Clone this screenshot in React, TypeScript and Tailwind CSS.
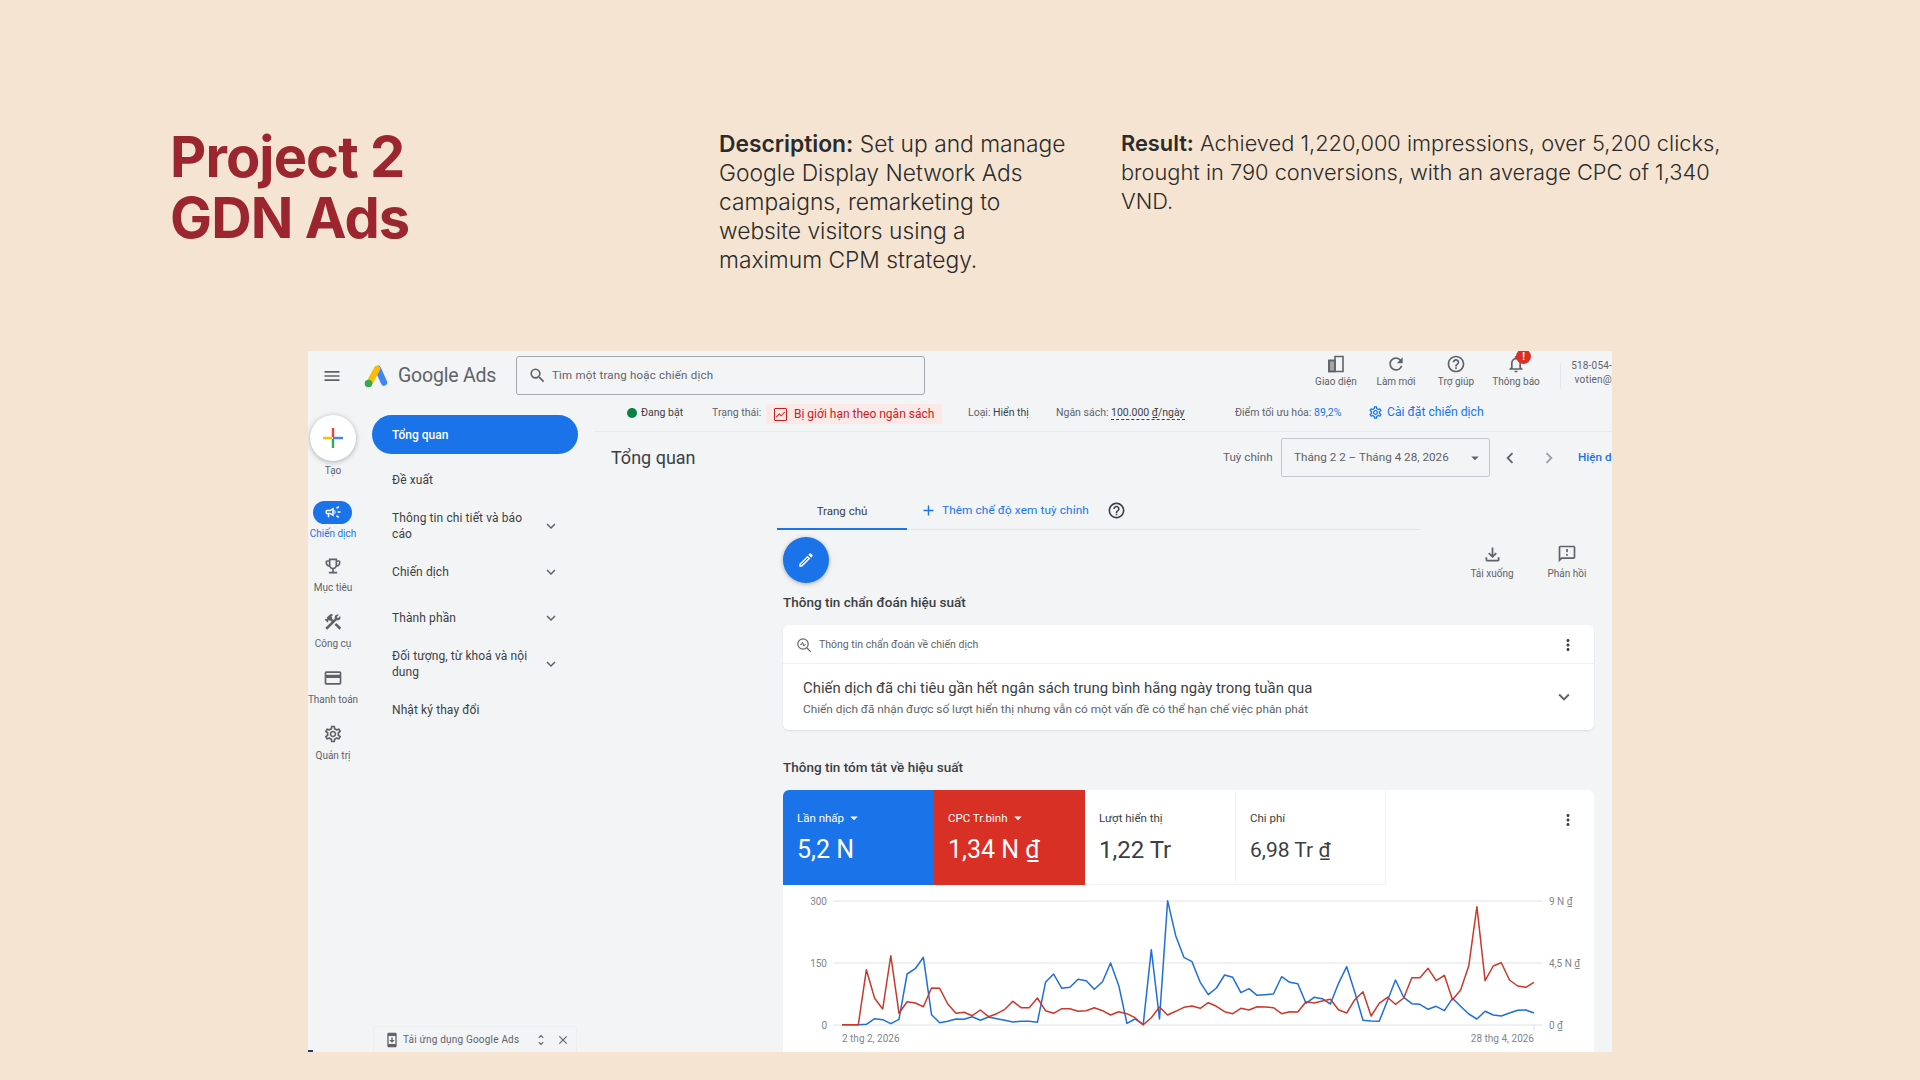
import React from "react";
import {
  MdMenu,
  MdSearch,
  MdOutlineCampaign,
  MdOutlineEmojiEvents,
  MdConstruction,
  MdOutlineCreditCard,
  MdOutlineSettings,
  MdExpandMore,
  MdRefresh,
  MdHelpOutline,
  MdNotificationsNone,
  MdOutlineFileDownload,
  MdOutlineFeedback,
  MdOutlineEdit,
  MdMoreVert,
  MdArrowDropDown,
  MdChevronLeft,
  MdChevronRight,
  MdClose,
  MdUnfoldMore,
  MdAdd,
  MdOutlineShowChart,
  MdSecurityUpdate,
} from "react-icons/md";

const red = [
  737, 737, 737, 572, 658, 690, 530, 703, 668, 672, 683, 627, 628, 675, 703, 700, 710, 693, 713, 704, 691, 667, 686, 686,
  657, 695, 703, 689, 689, 697, 695, 686, 695, 708, 698, 704, 716, 737, 716, 684, 708, 697, 685, 681, 688, 671, 682, 698,
  704, 688, 693, 683, 684, 686, 704, 698, 699, 668, 672, 666, 661, 692, 702, 662, 638, 711, 673, 655, 676, 657, 596, 596,
  568, 605, 589, 662, 633, 560, 383, 605, 561, 551, 603, 621, 625, 610,
];
const blue = [
  737, 737, 737, 736, 719, 722, 734, 721, 585, 569, 535, 707, 731, 727, 720, 721, 713, 724, 714, 719, 724, 729, 727, 727,
  730, 610, 585, 628, 625, 601, 605, 631, 608, 552, 620, 733, 720, 737, 512, 720, 365, 470, 535, 548, 610, 647, 627, 588,
  595, 641, 629, 649, 647, 645, 593, 610, 614, 673, 655, 659, 675, 613, 563, 640, 724, 726, 727, 665, 603, 655, 674, 676,
  691, 682, 695, 658, 682, 705, 720, 697, 708, 711, 702, 694, 693, 702,
];

const toPoints = (values: number[]) =>
  values.map((v, i) => `${(59 + i * 8.14).toFixed(1)},${(v / 3 - 106).toFixed(1)}`).join(" ");

function RailItem({ icon, label, h, active }: { icon: React.ReactNode; label: string; h: string; active?: boolean }) {
  return (
    <div className={`flex flex-col items-center ${h}`}>
      <div className="h-6 flex items-center justify-center">{icon}</div>
      <span className={`mt-[3px] text-[10px] leading-[14px] whitespace-nowrap ${active ? "text-[#1a73e8]" : "text-[#5f6368]"}`}>
        {label}
      </span>
    </div>
  );
}

function NavRow({ children, chevron }: { children: React.ReactNode; chevron?: boolean }) {
  return (
    <div className="h-[46px] flex items-center pl-[30px]">
      <span className="w-[150px] text-[12px] leading-[16px] text-[#3c4043] tracking-[0.1px]">{children}</span>
      {chevron && <MdExpandMore className="text-[18px] text-[#5f6368]" />}
    </div>
  );
}

function TopAction({ icon, label, gap }: { icon: React.ReactNode; label: string; gap?: string }) {
  return (
    <div className="w-[60px] flex flex-col items-center relative">
      <div className="h-[20px] flex items-center text-[#5f6368]">{icon}</div>
      <span className={`text-[10px] leading-[14px] text-[#5f6368] whitespace-nowrap ${gap ?? "mt-[1px]"}`}>{label}</span>
    </div>
  );
}

function Tile(props: { label: string; value: string; unit?: boolean; bg: string; caret?: boolean; w?: string; size?: string }) {
  const { label, value, unit, bg, caret, w, size } = props;
  return (
    <div className={`h-[95px] pl-[14px] pt-[20px] shrink-0 ${w ?? "w-[151px]"} ${bg}`}>
      <div className="flex items-center text-[11.5px] leading-[16px] h-[16px]">
        {label}
        {caret && <MdArrowDropDown className="text-[18px] ml-[1px]" />}
      </div>
      <div className={`leading-[30px] mt-[9px] whitespace-nowrap ${size ?? "text-[25px]"}`}>
        {value}
        {unit && " ₫"}
      </div>
    </div>
  );
}

export default function App() {
  return (
    <div className="w-[1920px] h-[1080px] overflow-hidden bg-[#f5e4d1] font-['Roboto',sans-serif]">
      {/* Heading */}
      <div className="h-[351px] flex pl-[170px] pt-[127px] font-['Inter',sans-serif]">
        <h1 className="w-[549px] text-[56px] leading-[61px] font-bold tracking-[-0.9px] text-[#9c2630]">
          Project 2
          <br />
          GDN Ads
        </h1>
        <p className="w-[402px] text-[22.8px] leading-[29px] font-light text-[#2b2b2b] pt-[2px]">
          <b className="font-semibold">Description:</b> Set up and manage
          <br />
          Google Display Network Ads
          <br />
          campaigns, remarketing to
          <br />
          website visitors using a
          <br />
          maximum CPM strategy.
        </p>
        <p className="w-[620px] text-[21.8px] leading-[29px] font-light text-[#2b2b2b] pt-[2px]">
          <b className="font-semibold">Result:</b> Achieved 1,220,000 impressions, over 5,200 clicks,
          <br />
          brought in 790 conversions, with an average CPC of 1,340
          <br />
          VND.
        </p>
      </div>

      {/* Screenshot of the Ads dashboard */}
      <div className="ml-[308px] w-[1304px] h-[701px] overflow-hidden bg-[#f2f4f6] flex flex-col relative">
        <header className="h-[49px] shrink-0 flex items-center">
          <MdMenu className="ml-[14px] text-[20px] text-[#5f6368]" />
          <svg className="ml-[22px]" width="24" height="24" viewBox="0 0 24 24">
            <line x1="14" y1="5" x2="20" y2="18.5" stroke="#4285f4" strokeWidth="6.5" strokeLinecap="round" />
            <line x1="13" y1="5" x2="6" y2="18" stroke="#fbbc04" strokeWidth="6.5" strokeLinecap="round" />
            <circle cx="4.5" cy="19.5" r="3.8" fill="#34a853" />
          </svg>
          <span className="ml-[10px] w-[118px] text-[19.5px] text-[#5f6368] tracking-[-0.2px]">Google Ads</span>
          <div className="w-[409px] h-[39px] border border-[#a5a8ad] rounded-[3px] flex items-center pl-[11px] text-[#5f6368]">
            <MdSearch className="text-[19px]" />
            <span className="ml-[5px] mt-[1px] text-[11.5px] tracking-[0.2px]">Tìm một trang hoặc chiến dịch</span>
          </div>
          <div className="ml-[381px] flex mb-[8px]">
            <TopAction
              label="Giao diện"
              icon={
                <svg width="18" height="18" viewBox="0 0 18 18" fill="none" stroke="#5f6368" strokeWidth="1.6">
                  <path d="M8 1.5h8v15H2v-11h6z" />
                  <rect x="2" y="5.5" width="6" height="11" fill="#5f6368" fillOpacity="0.55" />
                  <path d="M8 5.5v11" />
                </svg>
              }
            />
            <TopAction label="Làm mới" icon={<MdRefresh className="text-[20px]" />} />
            <TopAction label="Trợ giúp" icon={<MdHelpOutline className="text-[20px]" />} />
            <TopAction
              label="Thông báo"
              icon={
                <>
                  <MdNotificationsNone className="text-[20px]" />
                  <span className="absolute left-[30px] top-[-5px] w-[15px] h-[15px] rounded-full bg-[#d93025] text-white text-[10px] leading-[15px] font-bold text-center">
                    !
                  </span>
                </>
              }
            />
          </div>
          <div className="ml-[14px] h-[26px] border-l border-[#e4e6e9]" />
          <div className="ml-auto mb-[5px] text-right text-[10px] leading-[14px] text-[#5f6368] tracking-[0.2px]">
            518-054-
            <br />
            votien@
          </div>
        </header>

        <div className="flex flex-1 min-h-0">
          {/* Icon rail */}
          <aside className="w-[54px] shrink-0 flex flex-col items-center pt-[15px] pr-[4px]">
            <div className="w-[46px] h-[46px] rounded-full bg-white shadow-[0_1px_5px_rgba(60,64,67,0.4)] flex items-center justify-center">
              <svg width="22" height="22" viewBox="0 0 22 22">
                <rect x="9.8" y="1" width="2.4" height="9" fill="#ea4335" />
                <rect x="9.8" y="12" width="2.4" height="9" fill="#34a853" />
                <rect x="1" y="9.8" width="9" height="2.4" fill="#fbbc04" />
                <rect x="11" y="9.8" width="10" height="2.4" fill="#4285f4" />
              </svg>
            </div>
            <span className="mt-[3px] mb-[22px] text-[10px] leading-[14px] text-[#5f6368]">Tạo</span>
            <RailItem
              h="h-[54px]"
              active
              label="Chiến dịch"
              icon={
                <span className="w-[39px] h-[23px] rounded-full bg-[#1a73e8] flex items-center justify-center">
                  <MdOutlineCampaign className="text-[18px] text-white" />
                </span>
              }
            />
            <RailItem h="h-[56px]" label="Mục tiêu" icon={<MdOutlineEmojiEvents className="text-[20px] text-[#5f6368]" />} />
            <RailItem h="h-[56px]" label="Công cụ" icon={<MdConstruction className="text-[20px] text-[#5f6368]" />} />
            <RailItem h="h-[56px]" label="Thanh toán" icon={<MdOutlineCreditCard className="text-[20px] text-[#5f6368]" />} />
            <RailItem h="h-[56px]" label="Quản trị" icon={<MdOutlineSettings className="text-[20px] text-[#5f6368]" />} />
          </aside>

          {/* Nav */}
          <nav className="w-[232px] shrink-0 flex flex-col pt-[15px]">
            <div className="ml-[10px] w-[206px] h-[39px] rounded-full bg-[#1a73e8] text-white text-[12px] flex items-center pl-[20px] mb-[3px] font-medium">
              Tổng quan
            </div>
            <NavRow>Đề xuất</NavRow>
            <NavRow chevron>Thông tin chi tiết và báo cáo</NavRow>
            <NavRow chevron>Chiến dịch</NavRow>
            <NavRow chevron>Thành phần</NavRow>
            <NavRow chevron>Đối tượng, từ khoá và nội dung</NavRow>
            <NavRow>Nhật ký thay đổi</NavRow>
            <div className="mt-auto ml-[11px] w-[204px] h-[26px] rounded-t-[4px] border border-b-0 border-[#eceef0] flex items-center pl-[10px] text-[#5f6368]">
              <MdSecurityUpdate className="text-[16px] shrink-0" />
              <span className="ml-[3px] w-[131px] text-[10px] tracking-[0.2px] whitespace-nowrap">Tải ứng dụng Google Ads</span>
              <MdUnfoldMore className="text-[14px]" />
              <MdClose className="ml-[8px] text-[14px]" />
            </div>
          </nav>

          {/* Main */}
          <main className="flex-1 min-w-0">
            <div className="h-[32px] flex items-center pl-[33px] pb-[6px] border-b border-[#e8eaed] text-[10.5px] text-[#5f6368] whitespace-nowrap">
              <span className="w-[85px] shrink-0 flex items-center text-[#3c4043]">
                <span className="w-[10px] h-[10px] rounded-full bg-[#0b8043] mr-[4px]" />
                Đang bật
              </span>
              <span className="w-[54px] shrink-0">Trạng thái:</span>
              <span className="w-[202px] shrink-0">
                <span className="inline-flex items-center w-[176px] h-[20px] bg-[#fce8e6] text-[#c5221f] text-[12px] pl-[8px] mt-[4px]">
                  <span className="w-[13px] h-[13px] border border-[#c5221f] rounded-[1px] mr-[7px] flex items-center justify-center">
                    <MdOutlineShowChart className="text-[11px]" />
                  </span>
                  Bị giới hạn theo ngân sách
                </span>
              </span>
              <span className="w-[88px] shrink-0">
                Loại: <span className="text-[#3c4043]">Hiển thị</span>
              </span>
              <span className="w-[179px] shrink-0">
                Ngân sách: <span className="text-[#3c4043] border-b border-dashed border-[#3c4043]">100.000 ₫/ngày</span>
              </span>
              <span className="w-[133px] shrink-0">
                Điểm tối ưu hóa: <span className="text-[#1a73e8]">89,2%</span>
              </span>
              <span className="flex items-center text-[#1a73e8] text-[12.2px]">
                <MdOutlineSettings className="text-[15px] mr-[4px]" />
                Cài đặt chiến dịch
              </span>
            </div>

            <div className="mt-[6px] h-[39px] flex items-center pl-[17px] whitespace-nowrap">
              <h2 className="w-[612px] text-[18px] text-[#3c4043]">Tổng quan</h2>
              <span className="w-[58px] text-[11.7px] text-[#5f6368]">Tuỳ chỉnh</span>
              <div className="w-[209px] h-[39px] border border-[#c4c7cb] rounded-[2px] flex items-center pl-[12px] text-[11.7px] text-[#5f6368]">
                Tháng 2 2 – Tháng 4 28, 2026
                <MdArrowDropDown className="ml-auto mr-[5px] text-[18px]" />
              </div>
              <MdChevronLeft className="ml-[9px] text-[22px] text-[#5f6368]" />
              <MdChevronRight className="ml-[17px] text-[22px] text-[#9aa0a6]" />
              <span className="ml-[18px] text-[11.7px] font-medium text-[#1a73e8]">Hiện d</span>
            </div>

            <div className="ml-[183px] mt-[15px] w-[643px] h-[38px] border-b border-[#e3e5e8] flex items-center">
              <div className="w-[130px] h-[38px] border-b-2 border-[#1a73e8] text-center text-[11.5px] leading-[38px] text-[#3c4043]">
                Trang chủ
              </div>
              <MdAdd className="ml-[13px] text-[17px] text-[#1a73e8]" />
              <span className="ml-[5px] w-[165px] text-[11.8px] text-[#1a73e8] tracking-[0.1px] whitespace-nowrap">Thêm chế độ xem tuỳ chỉnh</span>
              <MdHelpOutline className="text-[19px] text-[#3c4043]" />
            </div>

            <div className="ml-[189px] mt-[7px] mr-[15px] h-[46px] flex justify-between">
              <div className="w-[46px] h-[46px] rounded-full bg-[#1a73e8] shadow-[0_1px_4px_rgba(60,64,67,0.4)] flex items-center justify-center">
                <MdOutlineEdit className="text-[18px] text-white" />
              </div>
              <div className="flex gap-[15px] pt-[7px]">
                <TopAction gap="mt-[3px]" label="Tải xuống" icon={<MdOutlineFileDownload className="text-[21px]" />} />
                <TopAction gap="mt-[3px]" label="Phản hồi" icon={<MdOutlineFeedback className="text-[20px]" />} />
              </div>
            </div>

            <div className="ml-[189px] mr-[18px]">
              <h3 className="mt-[11px] h-[16px] text-[13.5px] leading-[16px] font-medium text-[#3c4043]">
                Thông tin chẩn đoán hiệu suất
              </h3>
              <section className="mt-[15px] h-[105px] bg-white rounded-[6px] shadow-[0_1px_2px_rgba(60,64,67,0.12)]">
                <div className="h-[39px] border-b border-[#eef0f2] flex items-center pl-[13px] pr-[17px] pt-[1px] text-[#5f6368]">
                  <svg width="16" height="16" viewBox="0 0 16 16" fill="none" stroke="#5f6368" strokeWidth="1.2">
                    <circle cx="7" cy="7" r="5.2" />
                    <path d="M11 11l3.8 3.8" />
                    <path d="M4.3 7.5h1.2l1-2.4 1.3 4 .9-1.6h1" strokeWidth="1" />
                  </svg>
                  <span className="ml-[7px] text-[10.5px]">Thông tin chẩn đoán về chiến dịch</span>
                  <MdMoreVert className="ml-auto text-[18px] text-[#3c4043]" />
                </div>
                <div className="h-[66px] flex items-center pl-[20px] pr-[19px]">
                  <div>
                    <div className="text-[14.9px] leading-[20px] text-[#3c4043]">
                      Chiến dịch đã chi tiêu gần hết ngân sách trung bình hằng ngày trong tuần qua
                    </div>
                    <div className="text-[11.8px] leading-[16px] mt-[3px] text-[#5f6368]">
                      Chiến dịch đã nhận được số lượt hiển thị nhưng vẫn có một vấn đề có thể hạn chế việc phân phát
                    </div>
                  </div>
                  <MdExpandMore className="ml-auto text-[22px] text-[#5f6368]" />
                </div>
              </section>

              <h3 className="mt-[29px] h-[16px] text-[13.5px] leading-[16px] font-medium text-[#3c4043]">
                Thông tin tóm tắt về hiệu suất
              </h3>
              <section className="mt-[15px] bg-white rounded-t-[6px] overflow-hidden">
                <div className="h-[95px] flex">
                  <Tile label="Lần nhấp" value="5,2 N" bg="bg-[#1a73e8] text-white" caret />
                  <Tile label="CPC Tr.bình" value="1,34 N" unit bg="bg-[#d93025] text-white" caret />
                  <Tile label="Lượt hiển thị" value="1,22 Tr" size="text-[24px]" bg="border-r border-b border-[#f1f3f4] text-[#3c4043]" />
                  <Tile label="Chi phí" value="6,98 Tr" unit w="w-[150px]" size="text-[21px]" bg="border-r border-b border-[#f1f3f4] text-[#3c4043] pl-[12px]" />
                  <MdMoreVert className="ml-auto mr-[17px] mt-[21px] text-[18px] text-[#3c4043]" />
                </div>
                <svg width="811" height="167" className="block font-['Roboto',sans-serif]">
                  {[16, 78, 140].map((y) => (
                    <line key={y} x1="50" x2="760" y1={y} y2={y} stroke="#e0e2e5" strokeWidth="1" />
                  ))}
                  <line x1="751" x2="751" y1="140" y2="146" stroke="#e0e2e5" />
                  <g fill="#80868b" fontSize="10">
                    <text x="44" y="20" textAnchor="end">300</text>
                    <text x="44" y="82" textAnchor="end">150</text>
                    <text x="44" y="144" textAnchor="end">0</text>
                    <text x="766" y="20">9 N ₫</text>
                    <text x="766" y="82">4,5 N ₫</text>
                    <text x="766" y="144">0 ₫</text>
                    <text x="59" y="157">2 thg 2, 2026</text>
                    <text x="751" y="157" textAnchor="end">28 thg 4, 2026</text>
                  </g>
                  <polyline points={toPoints(blue)} fill="none" stroke="#1f6fd6" strokeWidth="1.5" strokeLinejoin="round" />
                  <polyline points={toPoints(red)} fill="none" stroke="#c9392c" strokeWidth="1.5" strokeLinejoin="round" />
                </svg>
              </section>
            </div>
          </main>
        </div>
        {/* scrap of the cropped screenshot in the corner */}
        <span className="absolute left-0 bottom-0 w-[5px] h-[2px] bg-[#1f3a6e]" />
      </div>
    </div>
  );
}
